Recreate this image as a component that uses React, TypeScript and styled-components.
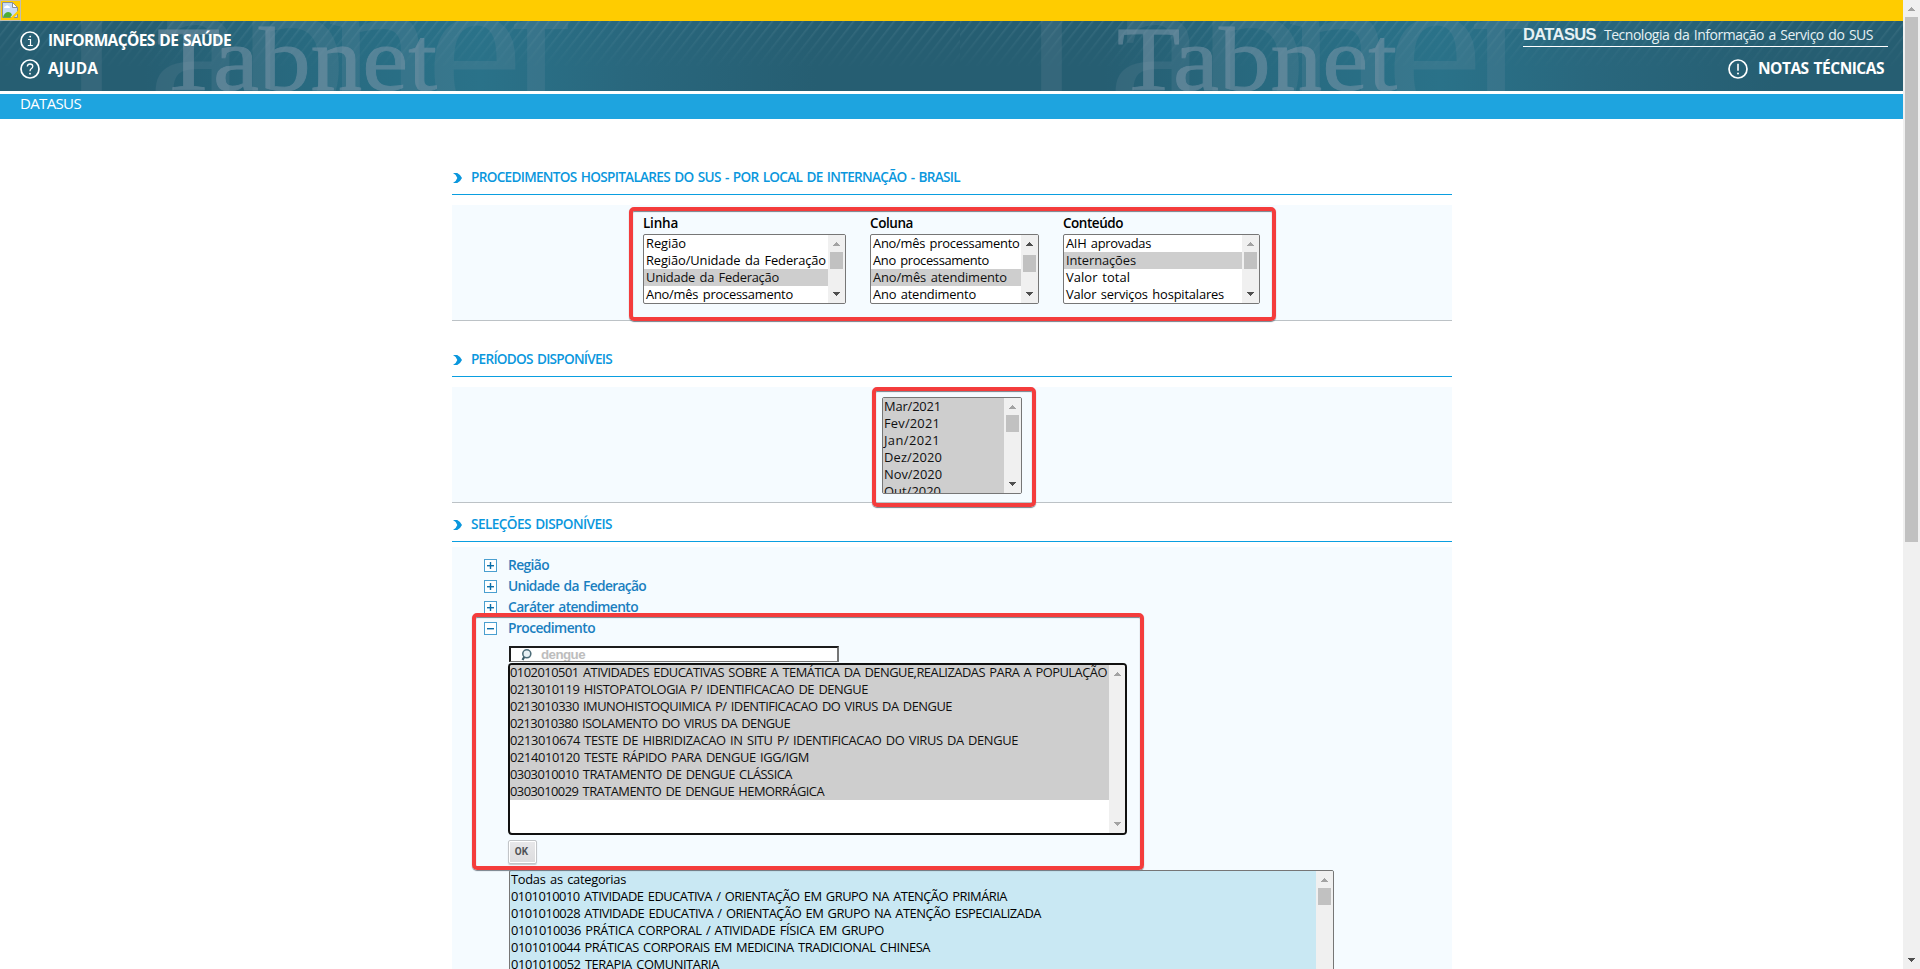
import React, { useLayoutEffect, useRef } from "react";
import styled, { createGlobalStyle, css } from "styled-components";

const GlobalStyle = createGlobalStyle`
  * { box-sizing: border-box; }
  body {
    margin: 0;
    background: #fff;
    color: #000;
    font-family: "Trebuchet MS", "Open Sans", "Noto Sans", sans-serif;
  }
`;

/* ---------- text tracked to a given width ---------- */

const Tracked = styled.span`
  display: inline-block;
  white-space: pre;
  word-spacing: 1.4px;
`;

function Fit({ w, children }: { w: number; children: string }) {
  const ref = useRef<HTMLSpanElement>(null);
  useLayoutEffect(() => {
    const el = ref.current;
    if (!el) return;
    el.style.letterSpacing = "0px";
    const natural = el.getBoundingClientRect().width;
    el.style.letterSpacing = `${(w - natural) / children.length}px`;
  }, [w, children]);
  return <Tracked ref={ref}>{children}</Tracked>;
}

/* ---------- page frame ---------- */

const Page = styled.div`
  display: flex;
  width: 1920px;
  height: 969px;
  overflow: hidden;
`;

const Main = styled.div`
  width: 1903px;
  height: 969px;
  overflow: hidden;
`;

const GovBar = styled.div`
  height: 21px;
  background: #ffcc00;
`;

const Header = styled.header`
  position: relative;
  display: flex;
  justify-content: space-between;
  height: 70px;
  background: #265e72;
  color: #fff;
`;

const HeaderArt = styled.svg`
  position: absolute;
  inset: 0;
`;

const HeaderSide = styled.div<{ $right?: boolean }>`
  position: relative;
  display: flex;
  flex-direction: column;
  ${(p) =>
    p.$right
      ? css`
          width: 365px;
          margin-right: 15px;
        `
      : css`
          padding: 8px 0 0 20px;
          gap: 4px;
        `}
`;

const HeaderLink = styled.a<{ $end?: boolean }>`
  display: flex;
  align-items: center;
  justify-content: ${(p) => (p.$end ? "flex-end" : "flex-start")};
  gap: ${(p) => (p.$end ? 10 : 8)}px;
  height: 24px;
  padding-right: ${(p) => (p.$end ? 4 : 0)}px;
  margin-top: ${(p) => (p.$end ? 10 : 0)}px;
  font-size: 15.5px;
  font-weight: 700;
  line-height: 24px;
  span { margin-top: -2px; }
`;

const Tagline = styled.div`
  display: flex;
  align-items: baseline;
  gap: 8px;
  height: 26px;
  border-bottom: 1px solid #fff;
  font-size: 14px;
  line-height: 26px;
  color: #e6f1f4;
  b {
    font-family: "Liberation Sans", Arial, sans-serif;
    font-size: 16.5px;
  }
`;

const Crumb = styled.div`
  height: 25px;
  margin-top: 3px;
  padding-left: 20px;
  background: #1ea4df;
  color: #fff;
  font-size: 15px;
  line-height: 19px;
`;

const Content = styled.main`
  width: 1000px;
  margin-left: 452px;
`;

/* ---------- sections ---------- */

const Heading = styled.h2<{ $top: number }>`
  display: flex;
  align-items: flex-end;
  gap: 9px;
  height: 30px;
  margin: ${(p) => p.$top}px 0 0;
  padding: 0 0 11px 1px;
  border-bottom: 1px solid #0a9ee0;
  color: #0a97dd;
  font-size: 13.6px;
  font-weight: 600;
  line-height: 11px;
  svg { flex: none; }
`;

const HeadingText = styled.span`
  margin-bottom: 1px;
`;

const Panel = styled.section<{ $gap: number; $open?: boolean }>`
  position: relative;
  margin-top: ${(p) => p.$gap}px;
  background: #f5fbff;
  height: ${(p) => (p.$open ? 460 : 116)}px;
  border-bottom: 1px solid #bcc2c6;
`;

const Fields = styled.div`
  display: flex;
  gap: 24px;
  padding: 9px 0 0 191px;
`;

const Field = styled.label`
  display: flex;
  flex-direction: column;
  align-items: flex-start;
  gap: 1px;
  font-size: 13.5px;
  font-weight: 600;
  line-height: 19px;
`;

const Periods = styled.div`
  padding: 10px 0 0 430px;
`;

const Frame = styled.div<{ $x: number; $y: number; $w: number; $h: number }>`
  position: absolute;
  left: ${(p) => p.$x}px;
  top: ${(p) => p.$y}px;
  width: ${(p) => p.$w}px;
  height: ${(p) => p.$h}px;
  border: 4px solid #f43c3c;
  border-radius: 5px;
  box-shadow: 0 1px 1px #77808a, inset 0 1px 1px #77808a;
  pointer-events: none;
  z-index: 2;
`;

/* ---------- list boxes ---------- */

const Box = styled.div<{ $w: number; $h: number; $focus?: boolean; $tint?: boolean }>`
  display: flex;
  width: ${(p) => p.$w}px;
  height: ${(p) => p.$h}px;
  overflow: hidden;
  border: ${(p) => (p.$focus ? "2px solid #101010" : "1px solid #767676")};
  border-radius: ${(p) => (p.$focus ? 4 : 2)}px;
  background: ${(p) => (p.$tint ? "#c9e8f3" : "#fff")};
  font-size: 12.9px;
  font-weight: 400;
  line-height: 17px;
`;

const Options = styled.div<{ $pad: number; $lift?: number }>`
  flex: 1;
  min-width: 0;
  margin-top: ${(p) => -(p.$lift || 0)}px;
  > div { padding-left: ${(p) => p.$pad}px; }
`;

const Option = styled.div<{ $on?: boolean }>`
  height: 17px;
  white-space: nowrap;
  background: ${(p) => (p.$on ? "#cecece" : "transparent")};
  color: ${(p) => (p.$on ? "#101010" : "#000")};
`;

const Track = styled.div<{ $w: number }>`
  display: flex;
  flex: none;
  flex-direction: column;
  align-items: center;
  width: ${(p) => p.$w}px;
  background: #f0f0f0;
`;

const Thumb = styled.div<{ $h: number; $gap?: number; $w?: number }>`
  width: ${(p) => p.$w || 13}px;
  height: ${(p) => p.$h}px;
  margin-top: ${(p) => p.$gap || 0}px;
  background: #c1c1c1;
`;

const ArrowCell = styled.svg<{ $bottom?: boolean }>`
  display: block;
  flex: none;
  ${(p) => p.$bottom && "margin-top: auto;"}
`;

function Arrow({ down, dim }: { down?: boolean; dim?: boolean }) {
  return (
    <ArrowCell $bottom={down} width="17" height="17" viewBox="0 0 17 17" shapeRendering="crispEdges">
      <path d={down ? "M5 6h7L8.5 10z" : "M5 11h7L8.5 7z"} fill={dim ? "#a3a3a3" : "#4f4f4f"} />
    </ArrowCell>
  );
}

type Item = [text: string, width: number, on?: boolean];

interface ListProps {
  items: Item[];
  w: number;
  h: number;
  pad: number;
  lift?: number;
  thumb?: number;
  top?: boolean;
  noBottom?: boolean;
  focus?: boolean;
  tint?: boolean;
}

function List({ items, w, h, pad, lift, thumb, top = true, noBottom, focus, tint }: ListProps) {
  return (
    <Box $w={w} $h={h} $focus={focus} $tint={tint}>
      <Options $pad={pad} $lift={lift}>
        {items.map(([text, width, on]) => (
          <Option key={text} $on={on}>
            <Fit w={width}>{text}</Fit>
          </Option>
        ))}
      </Options>
      <Track $w={focus ? 16 : 17}>
        <Arrow dim={top} />
        {thumb !== undefined && <Thumb $h={17} $gap={thumb} />}
        {!noBottom && <Arrow down dim={focus} />}
      </Track>
    </Box>
  );
}

/* ---------- selections ---------- */

const Tree = styled.div`
  padding: 8px 0 0 32px;
`;

const Node = styled.div`
  display: flex;
  align-items: center;
  gap: 11px;
  height: 21px;
  color: #1a7fc0;
  font-size: 13.8px;
  font-weight: 600;
  line-height: 21px;
  span { margin-top: -3px; }
`;

const Nested = styled.div`
  display: flex;
  flex-direction: column;
  align-items: flex-start;
  padding: 7px 0 0 25px;
`;

const Search = styled.div`
  display: flex;
  align-items: center;
  gap: 9px;
  width: 330px;
  height: 16px;
  padding-left: 10px;
  margin-bottom: 1px;
  overflow: hidden;
  border-style: solid;
  border-width: 2px 2px 1px;
  border-color: #1c1c1c #767676 #767676 #1c1c1c;
  background: #fff;
  color: #bdbdbd;
  font: 700 13.33px/14px "Liberation Sans", Arial, sans-serif;
`;

const FocusWrap = styled.div`
  margin-left: -1px;
`;

const OkButton = styled.button`
  width: 29px;
  height: 24px;
  margin: 5px 0 6px -1px;
  padding: 0 2px 0 0;
  border: 1px solid #c2c5c8;
  border-radius: 2px;
  box-shadow: inset 0 0 0 1px #fff, 0 1px 1px #c9cdd0;
  background: linear-gradient(#e8e8ea, #dcdcde);
  color: #505356;
  font: 700 10px/20px Roboto, Arial, sans-serif;
`;

function Chevron() {
  return (
    <svg width="9" height="10" viewBox="0 0 9 10">
      <path d="M0 0H4.2Q7.5 1.6 9 5Q7.500 8.400 4.200 10H0Q3.200 8.500 4.300 5Q3.200 1.500 0 0Z" fill="#0a97dd" />
    </svg>
  );
}

function Toggle({ open }: { open?: boolean }) {
  return (
    <svg width="13" height="13" viewBox="0 0 13 13">
      <rect x=".5" y=".5" width="12" height="12" fill="#fff" stroke="#4a9fd0" />
      <rect x="3" y="6" width="7" height="1.400" fill="#0b6ea8" />
      {!open && <rect x="5.800" y="3" width="1.400" height="7" fill="#0b6ea8" />}
    </svg>
  );
}

function BadgeIcon({ kind }: { kind: "info" | "help" | "alert" }) {
  return (
    <svg width="20" height="20" viewBox="0 0 20 20" fill="none" stroke="#fff">
      <circle cx="10" cy="10" r="9" strokeWidth="1.700" />
      {kind === "info" && (
        <>
          <path d="M8 8.500h2.500v6M7.800 14.500h5" strokeWidth="1.200" />
          <circle cx="10.200" cy="5.600" r=".9" fill="#fff" stroke="none" />
        </>
      )}
      {kind === "help" && (
        <>
          <path d="M7.300 7.500Q7.600 5 10 5Q12.800 5 12.800 7.300Q12.800 8.800 11.200 9.700Q10 10.500 10 12.200" strokeWidth="1.300" />
          <circle cx="10" cy="14.700" r=".9" fill="#fff" stroke="none" />
        </>
      )}
      {kind === "alert" && (
        <>
          <path d="M10 4.800v7" strokeWidth="1.600" />
          <circle cx="10" cy="14.400" r="1" fill="#fff" stroke="none" />
        </>
      )}
    </svg>
  );
}

const Picture = styled.svg`
  display: block;
`;

function BrokenImage() {
  return (
    <Picture width="21" height="21" viewBox="0 0 21 21">
      <rect x=".5" y=".5" width="20" height="20" fill="none" stroke="#c4bfae" />
      <path d="M2.500 2.500h10l5 5v10h-15z" fill="#c7dcf8" stroke="#8c8f94" />
      <path d="M12.500 2.500v5h5z" fill="#fff" stroke="#8c8f94" />
      <path d="M4 8q0-2 2-2 1-1.500 2.500 0 1.500 0 1.500 2z" fill="#fff" />
      <path d="M3 17.500q1-5 5-5.500 3 0 4 3l-2 2.500z" fill="#4fae33" />
      <path d="M10.500 18l7.500-7.500v3L13.500 18z" fill="#fc0" />
    </Picture>
  );
}

function Magnifier() {
  return (
    <svg width="11" height="12" viewBox="0 0 11 12">
      <circle cx="5.800" cy="4.800" r="4" fill="#e8f1f5" stroke="#4c6c78" strokeWidth="1.600" />
      <path d="M3.200 8L1.500 11" stroke="#3c5c69" strokeWidth="2.200" />
    </svg>
  );
}

function TabnetArt() {
  return (
    <HeaderArt width="1903" height="70">
      <defs>
        <linearGradient id="glow" x1="0" x2="1" y1="0" y2="0">
          <stop offset="0" stopColor="#265e72" />
          <stop offset=".15" stopColor="#265e72" />
          <stop offset=".32" stopColor="#286a80" />
          <stop offset=".5" stopColor="#2a7289" />
          <stop offset=".66" stopColor="#29677d" />
          <stop offset=".85" stopColor="#265e72" />
          <stop offset="1" stopColor="#265e72" />
        </linearGradient>
        <pattern id="lines" width="8" height="8" patternUnits="userSpaceOnUse" patternTransform="rotate(38)">
          <rect width="1.600" height="8" fill="#8db0bd" />
        </pattern>
        <linearGradient id="fade" x1="0" x2="0" y1="0" y2="1">
          <stop offset="0" stopColor="#fff" />
          <stop offset=".65" stopColor="#000" />
        </linearGradient>
        <mask id="top">
          <rect width="960" height="70" fill="url(#fade)" />
        </mask>
        <pattern id="tile" width="960" height="70" patternUnits="userSpaceOnUse">
          <rect width="960" height="70" fill="url(#glow)" />
          <rect width="960" height="70" fill="url(#lines)" opacity=".17" mask="url(#top)" />
          <g fontFamily="Liberation Serif, serif">
            <text x="25 148 238 325 426 512" y="99" fontSize="218" fill="#7c93a5" opacity=".17">
              Tabnet
            </text>
            <text x="157" y="68.500" fontSize="91" textLength="280" lengthAdjust="spacingAndGlyphs" fill="#8299ac" stroke="#8299ac" strokeWidth=".8" opacity=".5">
              Tabnet
            </text>
          </g>
        </pattern>
      </defs>
      <rect width="1903" height="70" fill="url(#tile)" />
    </HeaderArt>
  );
}

/* ---------- data ---------- */

const rows: Item[] = [
  ["Região", 40],
  ["Região/Unidade da Federação", 180],
  ["Unidade da Federação", 133, true],
  ["Ano/mês processamento", 147],
];

const columns: Item[] = [
  ["Ano/mês processamento", 146.5],
  ["Ano processamento", 116],
  ["Ano/mês atendimento", 134, true],
  ["Ano atendimento", 103],
];

const measures: Item[] = [
  ["AIH aprovadas", 85],
  ["Internações", 70, true],
  ["Valor total", 64],
  ["Valor serviços hospitalares", 158],
];

const periods: Item[] = [
  ["Mar/2021", 57, true],
  ["Fev/2021", 56, true],
  ["Jan/2021", 56, true],
  ["Dez/2020", 58, true],
  ["Nov/2020", 58, true],
  ["Out/2020", 57, true],
];

const found: Item[] = [
  ["0102010501 ATIVIDADES EDUCATIVAS SOBRE A TEMÁTICA DA DENGUE,REALIZADAS PARA A POPULAÇÃO", 597, true],
  ["0213010119 HISTOPATOLOGIA P/ IDENTIFICACAO DE DENGUE", 358, true],
  ["0213010330 IMUNOHISTOQUIMICA P/ IDENTIFICACAO DO VIRUS DA DENGUE", 442, true],
  ["0213010380 ISOLAMENTO DO VIRUS DA DENGUE", 280, true],
  ["0213010674 TESTE DE HIBRIDIZACAO IN SITU P/ IDENTIFICACAO DO VIRUS DA DENGUE", 508, true],
  ["0214010120 TESTE RÁPIDO PARA DENGUE IGG/IGM", 299, true],
  ["0303010010 TRATAMENTO DE DENGUE CLÁSSICA", 282, true],
  ["0303010029 TRATAMENTO DE DENGUE HEMORRÁGICA", 314, true],
];

const categories: Item[] = [
  ["Todas as categorias", 115],
  ["0101010010 ATIVIDADE EDUCATIVA / ORIENTAÇÃO EM GRUPO NA ATENÇÃO PRIMÁRIA", 496],
  ["0101010028 ATIVIDADE EDUCATIVA / ORIENTAÇÃO EM GRUPO NA ATENÇÃO ESPECIALIZADA", 530],
  ["0101010036 PRÁTICA CORPORAL / ATIVIDADE FÍSICA EM GRUPO", 373],
  ["0101010044 PRÁTICAS CORPORAIS EM MEDICINA TRADICIONAL CHINESA", 419],
  ["0101010052 TERAPIA COMUNITARIA", 208],
];

const nodes: [string, number][] = [
  ["Região", 41],
  ["Unidade da Federação", 138],
  ["Caráter atendimento", 130],
];

function SectionHeading({ top, w, children }: { top: number; w: number; children: string }) {
  return (
    <Heading $top={top}>
      <Chevron />
      <HeadingText>
        <Fit w={w}>{children}</Fit>
      </HeadingText>
    </Heading>
  );
}

export default function App() {
  return (
    <>
      <GlobalStyle />
      <Page>
        <Main>
          <GovBar>
            <BrokenImage />
          </GovBar>
          <Header>
            <TabnetArt />
            <HeaderSide>
              <HeaderLink>
                <BadgeIcon kind="info" />
                <Fit w={183}>INFORMAÇÕES DE SAÚDE</Fit>
              </HeaderLink>
              <HeaderLink>
                <BadgeIcon kind="help" />
                <Fit w={50}>AJUDA</Fit>
              </HeaderLink>
            </HeaderSide>
            <HeaderSide $right>
              <Tagline>
                <b><Fit w={73}>DATASUS</Fit></b>
                <Fit w={269}>Tecnologia da Informação a Serviço do SUS</Fit>
              </Tagline>
              <HeaderLink $end>
                <BadgeIcon kind="alert" />
                <Fit w={126}>NOTAS TÉCNICAS</Fit>
              </HeaderLink>
            </HeaderSide>
          </Header>
          <Crumb>
            <Fit w={61}>DATASUS</Fit>
          </Crumb>
          <Content>
            <SectionHeading top={46} w={489}>
              PROCEDIMENTOS HOSPITALARES DO SUS - POR LOCAL DE INTERNAÇÃO - BRASIL
            </SectionHeading>
            <Panel $gap={10}>
              <Fields>
                <Field>
                  <Fit w={35}>Linha</Fit>
                  <List items={rows} w={203} h={70} pad={2} thumb={0} />
                </Field>
                <Field>
                  <Fit w={43}>Coluna</Fit>
                  <List items={columns} w={169} h={70} pad={2} thumb={3} top={false} />
                </Field>
                <Field>
                  <Fit w={60}>Conteúdo</Fit>
                  <List items={measures} w={197} h={70} pad={2} thumb={0} />
                </Field>
              </Fields>
              <Frame $x={177} $y={2} $w={647} $h={114} />
            </Panel>

            <SectionHeading top={26} w={141}>
              PERÍODOS DISPONÍVEIS
            </SectionHeading>
            <Panel $gap={10}>
              <Periods>
                <List items={periods} w={140} h={97} pad={1} thumb={0} />
              </Periods>
              <Frame $x={420} $y={0} $w={164} $h={120} />
            </Panel>

            <SectionHeading top={9} w={141}>
              SELEÇÕES DISPONÍVEIS
            </SectionHeading>
            <Panel $gap={5} $open>
              <Tree>
                {nodes.map(([name, w]) => (
                  <Node key={name}>
                    <Toggle />
                    <Fit w={w}>{name}</Fit>
                  </Node>
                ))}
                <Node>
                  <Toggle open />
                  <Fit w={87}>Procedimento</Fit>
                </Node>
                <Nested>
                  <Search>
                    <Magnifier />
                    <Fit w={44}>dengue</Fit>
                  </Search>
                  <FocusWrap>
                    <List items={found} w={619} h={172} pad={0} lift={1} focus />
                  </FocusWrap>
                  <OkButton>OK</OkButton>
                  <List items={categories} w={825} h={140} pad={1} thumb={0} tint noBottom />
                </Nested>
              </Tree>
              <Frame $x={20} $y={66} $w={672} $h={257} />
            </Panel>
          </Content>
        </Main>
        <Track $w={17}>
          <Arrow dim />
          <Thumb $h={525} />
          <Arrow down />
        </Track>
      </Page>
    </>
  );
}
